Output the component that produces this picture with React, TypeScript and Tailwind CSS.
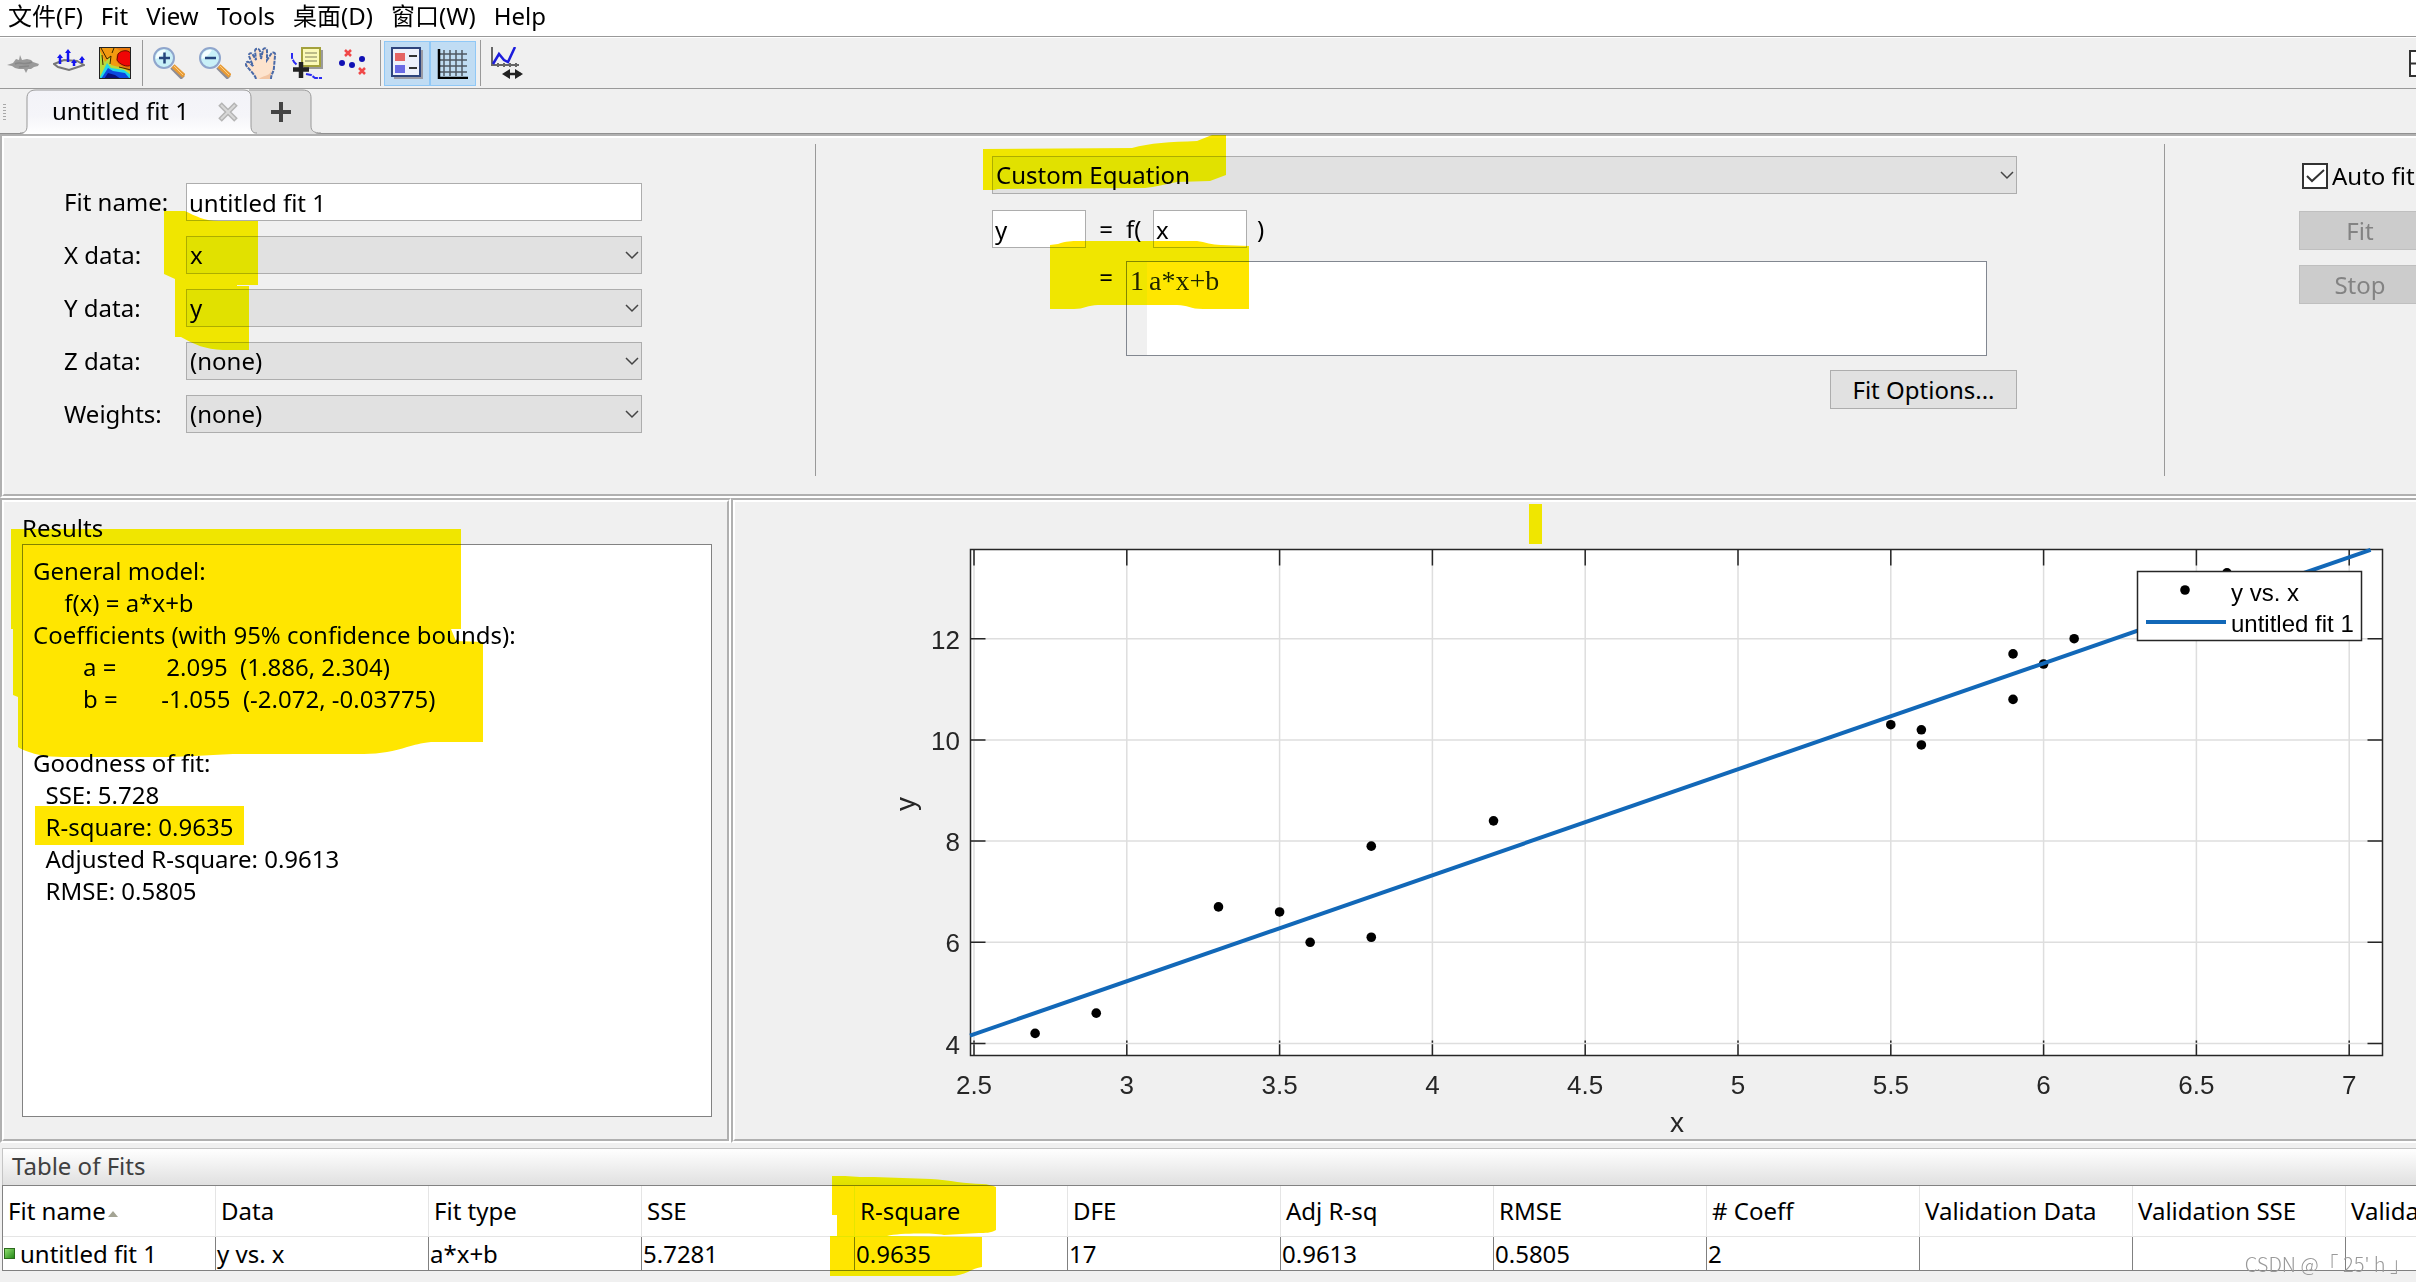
import type { ReactNode } from "react"

const menus = ["文件(F)", "Fit", "View", "Tools", "桌面(D)", "窗口(W)", "Help"]

const resultsText = `General model:
     f(x) = a*x+b
Coefficients (with 95% confidence bounds):
        a =        2.095  (1.886, 2.304)
        b =       -1.055  (-2.072, -0.03775)

Goodness of fit:
  SSE: 5.728
  R-square: 0.9635
  Adjusted R-square: 0.9613
  RMSE: 0.5805`

const columns = [
  { title: "Fit name", value: "untitled fit 1" },
  { title: "Data", value: "y vs. x" },
  { title: "Fit type", value: "a*x+b" },
  { title: "SSE", value: "5.7281" },
  { title: "R-square", value: "0.9635" },
  { title: "DFE", value: "17" },
  { title: "Adj R-sq", value: "0.9613" },
  { title: "RMSE", value: "0.5805" },
  { title: "# Coeff", value: "2" },
  { title: "Validation Data", value: "" },
  { title: "Validation SSE", value: "" },
  { title: "Validation RMSE", value: "" },
]

const points = [
  [2.7, 4.2], [2.9, 4.6], [3.3, 6.7], [3.5, 6.6], [3.6, 6], [3.8, 6.1], [3.8, 7.9], [4.2, 8.4],
  [5.5, 10.3], [5.6, 10.2], [5.6, 9.9], [5.9, 11.7], [5.9, 10.8], [6, 11.5], [6.1, 12], [6.6, 13.3],
]
const xTicks = [2.5, 3, 3.5, 4, 4.5, 5, 5.5, 6, 6.5, 7]
const yTicks = [4, 6, 8, 10, 12]

/* ---------- toolbar icons ---------- */

function SurfaceIcon() {
  return (
    <svg width="32" height="32" viewBox="0 0 32 32" aria-hidden="true">
      <path d="M0 18L6 16L9 12L12 13L13 8L15 13L20 12L24 13L26 15L32 17L31 19L27 20L24 22L21 22L19 26L17 22L12 22L8 21L5 19Z" fill="#9a9a9a" />
      <path d="M8 17C13 14 17 19 25 15M12 20L22 19" stroke="#888" strokeWidth="1.5" fill="none" />
    </svg>
  )
}

function ResidualsIcon() {
  return (
    <svg width="32" height="32" viewBox="0 0 32 32" aria-hidden="true">
      <path d="M1 17L11 13L24 14L31 18L22 21L16 23L5 20Z" fill="#eee" stroke="#777" strokeWidth="2" />
      <path d="M7 17V9M15 15V4M21 19V14M29 16V11" stroke="#1414f0" strokeWidth="2.5" />
      <path d="M4 11L7 7L10 11ZM12 6L15 2L18 6ZM18 16L21 12L24 16ZM26 13L29 9L32 13Z" fill="#1414f0" />
    </svg>
  )
}

function ContourIcon() {
  return (
    <svg width="32" height="32" viewBox="0 0 32 32" aria-hidden="true">
      <rect width="32" height="32" fill="#f29a10" />
      <path d="M14 0H32V32L24 20C16 16 14 8 22 4Z" fill="#e8780c" />
      <path d="M19 7C23 2 32 3 32 8V18C28 21 20 17 18 13Z" fill="#f00505" stroke="#6c0a00" />
      <path d="M0 2L6 15L11 10L12 18L24 21L32 25V32H0Z" fill="#b8dc3c" />
      <path d="M0 32L8 16L12 21L25 23L32 28V32Z" fill="#20d8e8" />
      <path d="M2 32L9 21L14 24L26 26L31 32Z" fill="#0b48e0" />
      <path d="M5 32L9 26L16 28L22 32Z" fill="#08107c" />
      <path d="M2 1L8 12L12 9L11 17M3 8L4 18M15 1L13 6M20 20L32 23" stroke="#3b2500" fill="none" />
      <rect x=".5" y=".5" width="31" height="31" fill="none" stroke="#222" />
    </svg>
  )
}

function ZoomIcon({ plus = false }: { plus?: boolean }) {
  return (
    <svg width="32" height="32" viewBox="0 0 32 32" aria-hidden="true">
      <path d="M19 20L30 31" stroke="#8d8d96" strokeWidth="5" />
      <path d="M20 19L31 29" stroke="#e79b37" strokeWidth="4.5" />
      <path d="M21 19L30 28" stroke="#ffcf80" strokeWidth="1" />
      <circle cx="11" cy="11" r="10" fill="#c9f0f8" stroke="#8fa5cc" strokeWidth="2" />
      <path d="M3 12A8 8 0 0 1 13 3C10 8 7 10 3 12Z" fill="#f4fdff" />
      <path d={plus ? "M6 11H17M11.5 5.5V16.5" : "M6 11H17"} stroke="#26457c" strokeWidth="2.5" />
    </svg>
  )
}

function PanIcon() {
  return (
    <svg width="32" height="32" viewBox="0 0 32 32" aria-hidden="true">
      <path
        d="M11 32C10 27 3 22 1 18C0 15 3 14 5 16L8 19L4 9C3 6 7 5 8 8L11 13L10 4C10 1 14 1 15 4L16 12L18 3C19 0 22 1 22 4V13L26 7C28 4 31 6 30 9L29 20C29 25 26 27 26 32Z"
        fill="#fde3cd"
      />
      <path d="M14 32C18 28 24 30 26 24V32Z" fill="#f3c6a4" />
      <path
        d="M11 32C10 27 3 22 1 18C0 15 3 14 5 16L8 19L4 9C3 6 7 5 8 8L11 13L10 4C10 1 14 1 15 4L16 12L18 3C19 0 22 1 22 4V13L26 7C28 4 31 6 30 9L29 20C29 25 26 27 26 32"
        fill="none"
        stroke="#4a6aa8"
        strokeWidth="2"
        strokeDasharray="4 1"
      />
    </svg>
  )
}

function DataCursorIcon() {
  return (
    <svg width="32" height="32" viewBox="0 0 32 32" aria-hidden="true">
      <path d="M13 3H32V22H13Z" fill="#9a9a9a" />
      <path d="M11 1H29V19H11Z" fill="#fbfab8" stroke="#a3a13c" strokeWidth="2" />
      <path d="M14 6H26M14 10H26M14 14H26" stroke="#a8a878" strokeWidth="1.5" />
      <path d="M1 6V11L3 15L6 18M15 27L20 28L24 31H31" stroke="#2a2af2" strokeWidth="2" fill="none" strokeDasharray="6 1" />
      <path d="M2 22.5H18M10 15V31" stroke="#222" strokeWidth="4.5" />
    </svg>
  )
}

function ExcludeIcon() {
  return (
    <svg width="32" height="32" viewBox="0 0 32 32" aria-hidden="true">
      <g fill="#1010b4">
        <circle cx="5" cy="16" r="3" />
        <circle cx="15" cy="18" r="3" />
        <circle cx="25" cy="12" r="3" />
      </g>
      <path d="M8 3L14 9M14 3L8 9M22 21L28 27M28 21L22 27" stroke="#f04848" strokeWidth="2.5" />
    </svg>
  )
}

function LegendIcon() {
  return (
    <svg width="32" height="32" viewBox="0 0 32 32" aria-hidden="true">
      <rect x="3" y="3" width="29" height="29" fill="#9b9ba4" />
      <rect x="1" y="1" width="28" height="28" fill="#eef1fb" stroke="#2e447c" strokeWidth="2" />
      <rect x="4" y="6" width="10" height="8" fill="#e46464" />
      <rect x="4" y="18" width="10" height="8" fill="#6a6ae4" />
      <path d="M18 9H26M18 21H26" stroke="#333" strokeWidth="2" />
    </svg>
  )
}

function GridIcon() {
  return (
    <svg width="32" height="32" viewBox="0 0 32 32" aria-hidden="true">
      <path d="M7 3V29M13 3V29M19 3V29M25 3V29M2 7H30M2 13H30M2 19H30M2 25H30" stroke="#4f5863" strokeWidth="1.5" />
      <path d="M2 2V31H31" stroke="#000" strokeWidth="2.5" fill="none" />
    </svg>
  )
}

function AxesLimitIcon() {
  return (
    <svg width="34" height="32" viewBox="0 0 34 32" aria-hidden="true">
      <path d="M2 0V18H29" stroke="#666" strokeWidth="2" fill="none" />
      <path d="M8 20V16M14 20V16M20 20V16M26 20V16" stroke="#666" strokeWidth="2" />
      <path d="M3 17L9 7L14 13L18 15L25 0" stroke="#1c1cdc" strokeWidth="2.5" fill="none" />
      <path d="M15 27H31" stroke="#222" strokeWidth="2.5" />
      <path d="M20 22V32L12 27ZM25 22V32L33 27Z" fill="#222" />
    </svg>
  )
}

/* ---------- shared pieces ---------- */

function ToolButton({ label, active = false, children }: { label: string; active?: boolean; children: ReactNode }) {
  return (
    <button
      type="button"
      aria-label={label}
      className={`flex h-[45px] w-[46px] items-center justify-center ${active ? "border border-[#90c8f6] bg-[#c0dcf3]" : ""}`}
    >
      {children}
    </button>
  )
}

function ToolSeparator() {
  return (
    <div className="flex w-2 justify-center">
      <div className="h-[46px] w-px bg-[#999]" />
    </div>
  )
}

function EtchedPanel({ children }: { children: ReactNode }) {
  return (
    <div className="border-2 border-t-[#b0b0b0] border-r-white border-b-white border-l-[#b0b0b0]">
      <div className="h-full border-2 border-t-white border-r-[#b0b0b0] border-b-[#b0b0b0] border-l-white">{children}</div>
    </div>
  )
}

// Marker stroke, drawn over whatever it covers.
function Marker({ className, viewBox, d }: { className: string; viewBox: string; d: string }) {
  return (
    <svg className={`pointer-events-none absolute mix-blend-darken ${className}`} viewBox={viewBox} aria-hidden="true">
      <path d={d} fill="#ffe600" />
    </svg>
  )
}

function Select({ id, label, value }: { id: string; label?: string; value: string }) {
  return (
    <div className="relative">
      <select
        id={id}
        aria-label={label}
        defaultValue={value}
        className="block h-[38px] w-full appearance-none border border-[#adadad] bg-[#e1e1e1] pl-[3px]"
      >
        <option>{value}</option>
      </select>
      <svg className="pointer-events-none absolute top-[15px] right-[3px]" width="14" height="9" aria-hidden="true">
        <path d="M1 1L7 7L13 1" fill="none" stroke="#444" strokeWidth="1.5" />
      </svg>
    </div>
  )
}

function Tabs() {
  return (
    <div className="flex h-[45px] items-stretch border-b border-[#909090] pl-[3px]">
      <div className="mt-[15px] h-4 w-[3px] bg-[repeating-linear-gradient(#a8a8a8_0_1px,transparent_1px_3px)]" />
      <div role="tablist" className="ml-3.5 flex">
        <div className="relative z-10 h-[45px] w-[237px]">
          <svg className="absolute inset-0" width="237" height="45" viewBox="0 0 237 45" aria-hidden="true">
            <defs>
              <linearGradient id="tabFill" x1="0" y1="0" x2="0" y2="1">
                <stop offset="0" stopColor="#f3f3f8" />
                <stop offset=".6" stopColor="#f5f5f9" />
                <stop offset="1" stopColor="#fff" />
              </linearGradient>
            </defs>
            <path d="M0 45C5 45 7 42 7 37V9C7 4 10 1 16 1H223C229 1 231 4 231 9V37C231 42 233 45 237 45Z" fill="url(#tabFill)" />
            <path d="M0 44C5 44 7 42 7 37V9C7 4 10 1 16 1H223C229 1 231 4 231 9V37C231 42 233 44 237 44" fill="none" stroke="#999" />
          </svg>
          <button type="button" role="tab" aria-selected="true" className="absolute inset-y-0 left-8 pb-0.5">
            untitled fit 1
          </button>
          <button type="button" aria-label="Close tab" className="absolute top-[13px] left-[198px]">
            <svg width="20" height="20" aria-hidden="true">
              <path d="M2 2L18 18M18 2L2 18" stroke="#b4b4b4" strokeWidth="5" />
              <path d="M3 3L17 17M17 3L3 17" stroke="#d8d8d8" strokeWidth="2" />
            </svg>
          </button>
        </div>
        <button type="button" aria-label="New fit" className="relative -ml-2 h-[45px] w-[72px]">
          <svg width="72" height="45" viewBox="0 0 72 45" aria-hidden="true">
            <path d="M0 1H53C60 1 62 4 62 9V37C62 42 65 45 72 45H0Z" fill="#dedede" />
            <path d="M0 1H53C60 1 62 4 62 9V37C62 42 65 44 72 44" fill="none" stroke="#999" />
            <path d="M22 23H42M32 13V33" stroke="#444" strokeWidth="4" />
          </svg>
        </button>
      </div>
    </div>
  )
}

/* ---------- fit settings ---------- */

function DataForm() {
  return (
    <div className="relative grid grid-cols-[122px_1fr] content-start items-center gap-y-[15px] pt-[45px] pr-[173px] pl-[60px]">
      <label htmlFor="fit-name">Fit name:</label>
      <input id="fit-name" defaultValue="untitled fit 1" className="h-[38px] w-full border border-[#adadad] bg-white pl-0.5" />
      <label htmlFor="x-data">X data:</label>
      <Select id="x-data" value="x" />
      <label htmlFor="y-data">Y data:</label>
      <Select id="y-data" value="y" />
      <label htmlFor="z-data">Z data:</label>
      <Select id="z-data" value="(none)" />
      <label htmlFor="weights">Weights:</label>
      <Select id="weights" value="(none)" />
      <Marker
        className="top-[73px] left-[160px] h-[139px] w-[94px]"
        viewBox="164 211 94 139"
        d="M164 211H185C195 216 205 221 219 221H258V285H237V286H249V350H223C205 349 195 345 181 337H175V279L164 274Z"
      />
    </div>
  )
}

function EquationForm() {
  return (
    <div className="relative pt-[18px] pr-[147px] pl-44">
      <Select id="fit-type" label="Fit type" value="Custom Equation" />
      <div className="mt-4 flex items-center">
        <input aria-label="Dependent variable" defaultValue="y" className="h-[38px] w-[94px] border border-[#adadad] bg-white pl-0.5" />
        <span className="w-10 text-center">=</span>
        <span className="w-[27px]">f(</span>
        <input aria-label="Independent variable" defaultValue="x" className="h-[38px] w-[94px] border border-[#adadad] bg-white pl-0.5" />
        <span className="pl-2.5">)</span>
      </div>
      <div className="mt-[13px] flex items-start pr-[30px] pl-[94px]">
        <span className="w-10 text-center">=</span>
        <div className="flex h-[95px] flex-1 border border-[#828790] bg-white font-['Liberation_Serif',serif] text-[28px] leading-8">
          <div className="w-5 bg-[#f0f0f0] pt-[3px] text-center text-[#222]">1</div>
          <textarea aria-label="Equation" defaultValue="a*x+b" spellCheck={false} className="flex-1 resize-none pt-[3px] pl-0.5 text-[#222]" />
        </div>
      </div>
      <div className="mt-3.5 flex justify-end">
        <button type="button" className="h-[39px] w-[187px] border border-[#adadad] bg-[#e1e1e1]">
          Fit Options...
        </button>
      </div>
      <Marker
        className="-top-[3px] left-[167px] h-[55px] w-[243px]"
        viewBox="983 135 243 55"
        d="M983 149L1132 148C1150 143 1170 142 1197 141L1212 135H1226V175L1210 181L1177 182C1165 184 1155 187 1145 188L998 189L994 190H983Z"
      />
      <Marker
        className="top-[103px] left-[234px] h-[68px] w-[199px]"
        viewBox="1050 241 199 68"
        d="M1050 245L1058 244C1066 241 1072 241 1078 241H1197C1205 242 1212 245 1221 245L1249 246V309H1203C1190 309 1188 305 1177 305H1098C1088 305 1084 309 1074 309H1050Z"
      />
    </div>
  )
}

function FitActions() {
  return (
    <div className="pt-[25px] pl-[134px]">
      <label className="relative flex h-[26px] items-center gap-1 pl-[3px] whitespace-nowrap">
        <input type="checkbox" defaultChecked className="peer h-[26px] w-[26px] shrink-0 appearance-none border-2 border-[#333] bg-white" />
        <svg className="pointer-events-none absolute top-0 left-[3px] hidden peer-checked:block" width="26" height="26" aria-hidden="true">
          <path d="M5 13L10 18L22 7" fill="none" stroke="#333" strokeWidth="2" />
        </svg>
        Auto fit
      </label>
      <button type="button" disabled className="mt-[22px] block h-[39px] w-[122px] border border-[#bfbfbf] bg-[#ccc] text-[#838383]">
        Fit
      </button>
      <button type="button" disabled className="mt-[15px] block h-[39px] w-[122px] border border-[#bfbfbf] bg-[#ccc] text-[#838383]">
        Stop
      </button>
    </div>
  )
}

/* ---------- plot ---------- */

const LEFT = 235.5
const RIGHT = 1647.5
const TOP = 47.5
const BOTTOM = 553.5
const sx = (x: number) => 239 + (x - 2.5) * 305.6
const sy = (y: number) => 541.5 - (y - 4) * 50.6
const fit = (x: number) => 2.095 * x - 1.055

function FitPlot() {
  return (
    <svg
      className="block w-full font-['Liberation_Sans',Arial,sans-serif]"
      viewBox="0 0 1701 637"
      role="img"
      aria-label="y vs. x with untitled fit 1"
    >
      <rect x={LEFT} y={TOP} width={RIGHT - LEFT} height={BOTTOM - TOP} fill="#fff" />
      {xTicks.map((t) => (
        <g key={t}>
          <path d={`M${sx(t)} ${TOP}V${BOTTOM}`} stroke="#dedede" strokeWidth="1.5" />
          <path d={`M${sx(t)} ${TOP}v16M${sx(t)} ${BOTTOM}v-15`} stroke="#262626" strokeWidth="1.5" />
          <text x={sx(t)} y="592" textAnchor="middle" fontSize="26" fill="#262626">
            {t}
          </text>
        </g>
      ))}
      {yTicks.map((t) => (
        <g key={t}>
          <path d={`M${LEFT} ${sy(t)}H${RIGHT}`} stroke="#dedede" strokeWidth="1.5" />
          <path d={`M${LEFT} ${sy(t)}h15M${RIGHT} ${sy(t)}h-15`} stroke="#262626" strokeWidth="1.5" />
          <text x="225" y={sy(t) + 10} textAnchor="end" fontSize="26" fill="#262626">
            {t}
          </text>
        </g>
      ))}
      <rect x={LEFT} y={TOP} width={RIGHT - LEFT} height={BOTTOM - TOP} fill="none" stroke="#262626" strokeWidth="1.5" />
      {points.map(([x, y]) => (
        <circle key={`${x}-${y}`} cx={sx(x)} cy={sy(y)} r="4.8" />
      ))}
      <path d={`M${sx(2.487)} ${sy(fit(2.487))}L${sx(7.07)} ${sy(fit(7.07))}`} stroke="#1268b8" strokeWidth="4" />

      <rect x="1402.5" y="69.5" width="224" height="69" fill="#fff" stroke="#262626" strokeWidth="1.5" />
      <circle cx="1450" cy="88" r="4.8" />
      <path d="M1411 120H1491" stroke="#1268b8" strokeWidth="4" />
      <text x="1496" y="99" fontSize="24">
        y vs. x
      </text>
      <text x="1496" y="130" fontSize="24">
        untitled fit 1
      </text>

      <text x="942" y="630" textAnchor="middle" fontSize="28" fill="#262626">
        x
      </text>
      <text transform="translate(180 302) rotate(-90)" textAnchor="middle" fontSize="28" fill="#262626">
        y
      </text>
      <rect x="794" y="2" width="13" height="40" fill="#f0e600" />
    </svg>
  )
}

/* ---------- table ---------- */

function FitsTable() {
  return (
    <section className="relative mt-[5px] ml-0.5">
      <h2 className="h-[37px] border-t border-l border-[#c4c4c4] bg-linear-to-b from-white to-[#e0e0e0] pl-[9px] leading-[34px] text-[#404040]">
        Table of Fits
      </h2>
      <table className="w-[2557px] table-fixed border-separate border-spacing-0 border-t border-l border-[#828282] bg-white">
        <thead>
          <tr>
            {columns.map((c, i) => (
              <th key={c.title} className="h-[51px] border-r border-b border-[#e5e5e5] p-0 pl-[5px] text-left font-normal whitespace-nowrap">
                {c.title}
                {i === 0 && (
                  <svg className="ml-0.5 inline-block align-middle" width="10" height="6" aria-hidden="true">
                    <path d="M5 0L10 6H0Z" fill="#a4a494" />
                  </svg>
                )}
              </th>
            ))}
          </tr>
        </thead>
        <tbody>
          <tr>
            {columns.map((c, i) => (
              <td key={c.title} className="h-[34px] border-r border-b border-[#808080] p-0 pl-px whitespace-nowrap">
                <span className="flex items-center gap-[5px]">
                  {i === 0 && <span className="size-[11px] border border-[#2c6a1c] bg-linear-to-br from-[#8fe070] to-[#1f8a12]" />}
                  {c.value}
                </span>
              </td>
            ))}
          </tr>
        </tbody>
      </table>
      <Marker
        className="top-[28px] left-[828px] h-[100px] w-[166px]"
        viewBox="830 1176 166 100"
        d="M832 1176H845C855 1177 865 1177 874 1177L931 1179C950 1180 965 1184 982 1184C988 1184 993 1186 996 1187V1230C991 1233 985 1233 979 1233L944 1235C930 1233 900 1233 887 1236L982 1237V1267C972 1268 965 1276 950 1276H830V1236H837V1215H832Z"
      />
    </section>
  )
}

export default function App() {
  return (
    <div className="relative min-h-screen overflow-hidden bg-[#f0f0f0] font-['Noto_Sans','Noto_Sans_CJK_SC',sans-serif] text-2xl leading-8 text-black">
      <nav className="flex h-[37px] items-center gap-[18px] border-b border-[#999] bg-white pb-[5px] pl-2">
        {menus.map((m) => (
          <button key={m} type="button">
            {m}
          </button>
        ))}
      </nav>

      <div className="flex h-[52px] items-center border-t border-b border-t-white border-b-[#999]">
        <ToolButton label="Surface plot"><SurfaceIcon /></ToolButton>
        <ToolButton label="Residuals plot"><ResidualsIcon /></ToolButton>
        <ToolButton label="Contour plot"><ContourIcon /></ToolButton>
        <ToolSeparator />
        <ToolButton label="Zoom in"><ZoomIcon plus /></ToolButton>
        <ToolButton label="Zoom out"><ZoomIcon /></ToolButton>
        <ToolButton label="Pan"><PanIcon /></ToolButton>
        <ToolButton label="Data cursor"><DataCursorIcon /></ToolButton>
        <ToolButton label="Exclude outliers"><ExcludeIcon /></ToolButton>
        <ToolSeparator />
        <ToolButton label="Legend" active><LegendIcon /></ToolButton>
        <ToolButton label="Grid" active><GridIcon /></ToolButton>
        <ToolSeparator />
        <ToolButton label="Axes limits"><AxesLimitIcon /></ToolButton>
        <button type="button" aria-label="Tile windows" className="-mr-5 ml-auto">
          <svg width="27" height="27" aria-hidden="true">
            <path d="M1 1H26V26H1ZM1 13.5H26M13 1V26" fill="#fff" stroke="#333" strokeWidth="2" />
          </svg>
        </button>
      </div>

      <Tabs />

      {/* the window runs past the right edge of the screen */}
      <main className="-mr-6">
        <EtchedPanel>
          <div className="grid min-h-[356px] grid-cols-[811px_1px_1fr_1px_271px]">
            <DataForm />
            <div className="mt-1.5 mb-[18px] bg-[#999]" />
            <EquationForm />
            <div className="mt-1.5 mb-[18px] bg-[#999]" />
            <FitActions />
          </div>
        </EtchedPanel>

        <div className="grid grid-cols-[731px_1fr]">
          <EtchedPanel>
            <div className="relative flex h-full flex-col pt-2.5 pr-[15px] pb-[22px] pl-[18px]">
              <label htmlFor="results">Results</label>
              <textarea
                id="results"
                readOnly
                value={resultsText}
                className="flex-1 resize-none border border-[#828282] bg-white p-2.5"
              />
              <Marker
                className="top-[27px] left-[7px] h-[228px] w-[472px]"
                viewBox="11 529 472 228"
                d="M11 529H461V629H451L456 641L483 642V742H431C420 743 415 745 407 747C395 751 380 754 364 754H233C205 755 185 757 160 757H63C45 757 35 754 29 752C24 750 20 749 18 747V697L13 695V629H11Z"
              />
              <Marker className="top-[304px] left-[31px] h-[39px] w-[209px]" viewBox="0 0 209 39" d="M0 0H209V39H0Z" />
            </div>
          </EtchedPanel>
          <EtchedPanel>
            <FitPlot />
          </EtchedPanel>
        </div>

        <FitsTable />
      </main>

      <div className="absolute right-1.5 bottom-0.5 font-['Noto_Sans_CJK_SC',sans-serif] text-xl leading-8 font-light text-[#999]">
        CSDN @「 25' h 」
      </div>
    </div>
  )
}
